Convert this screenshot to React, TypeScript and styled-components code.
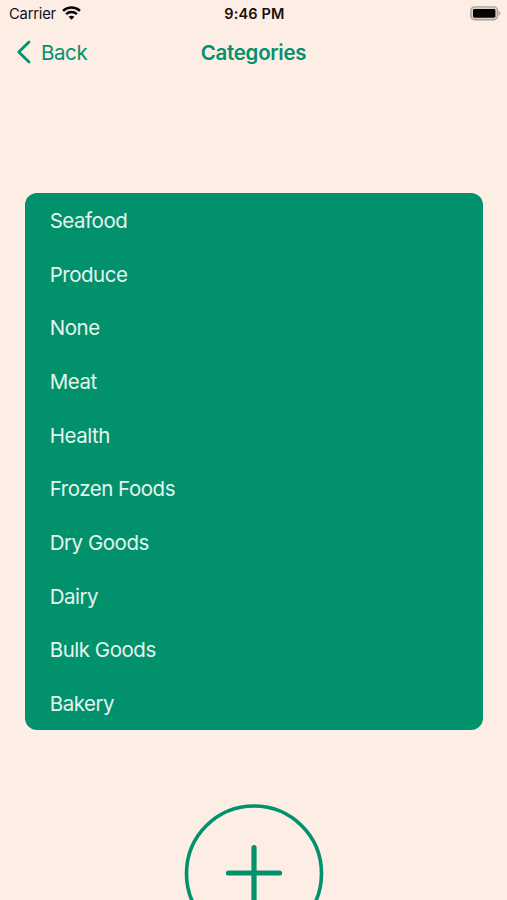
import React from "react";
import styled, { createGlobalStyle } from "styled-components";

const GREEN = "#02916d";
const CREAM = "#fdeee5";

const GlobalStyle = createGlobalStyle`
  * { box-sizing: border-box; }
  body { margin: 0; background: ${CREAM}; font-family: Inter, sans-serif; }
`;

const Screen = styled.main`
  display: flex;
  flex-direction: column;
  width: 100%;
  height: 900px;
  overflow: hidden;
  background: ${CREAM};
`;

const StatusBar = styled.header`
  flex: none;
  display: grid;
  grid-template-columns: 1fr auto 1fr;
  align-items: center;
  height: 27px;
  padding: 0 6px 0 9px;
  color: #15100e;
  font-size: 15px;
  line-height: 27px;
`;

const Carrier = styled.div`
  display: flex;
  align-items: center;
  gap: 6px;
  padding-top: 2px;
  font-size: 14.8px;
  line-height: 25px;
  letter-spacing: -0.22px;

  svg { margin-bottom: 3px; }
`;

const Clock = styled.time`
  margin-right: 1px;
  font-weight: 600;
  font-size: 14.5px;
  letter-spacing: 0.15px;
`;

const BatteryIcon = styled.svg`
  justify-self: end;
`;

const NavBar = styled.nav`
  flex: none;
  display: grid;
  grid-template-columns: 1fr auto 1fr;
  align-items: center;
  height: 51px;
  padding: 0 16px;
  color: ${GREEN};
`;

const BackButton = styled.button`
  display: flex;
  align-items: center;
  justify-self: start;
  gap: 10px;
  padding: 0;
  border: 0;
  background: none;
  color: inherit;
  font: 400 20.5px/28px Inter, sans-serif;
  letter-spacing: -0.4px;

  svg { margin-bottom: 2px; }
`;

const Title = styled.h1`
  margin: 0;
  font-size: 20.5px;
  font-weight: 600;
  line-height: 28px;
  letter-spacing: -0.3px;
`;

const CategoryList = styled.ul`
  flex: none;
  margin: 115px 24.5px 0 25.4px;
  padding: 0;
  border-radius: 12px;
  background: ${GREEN};
  list-style: none;
  overflow: hidden;
`;

const CategoryRow = styled.li`
  display: flex;
  align-items: center;
  height: 53.7px;
  padding: 1px 24.3px 0;
  color: #e4f5ec;
  font-size: 20.5px;
  letter-spacing: -0.47px;

  & + & {
    box-shadow: inset 0 1px 0 rgba(0, 70, 50, 0.03);
  }
`;

const AddButton = styled.button`
  flex: none;
  align-self: center;
  display: block;
  margin-top: 74px;
  padding: 0;
  border: 0;
  background: none;
  color: ${GREEN};

  svg { display: block; }
`;

const categories = [
  "Seafood",
  "Produce",
  "None",
  "Meat",
  "Health",
  "Frozen Foods",
  "Dry Goods",
  "Dairy",
  "Bulk Goods",
  "Bakery",
];

export default function App() {
  return (
    <>
      <GlobalStyle />
      <Screen>
        <StatusBar>
          <Carrier>
            Carrier
            <svg width="19" height="14" viewBox="0 0 19 14" fill="none" stroke="#080706" strokeWidth="2.5">
              <path d="M1 4.8C5.8 0.4 13.2 0.4 18 4.8" />
              <path d="M4.1 8.1C7.2 5.3 11.8 5.3 14.9 8.1" />
              <path d="M6.6 10.8C8.3 9.3 10.7 9.3 12.4 10.8L9.5 13.8Z" fill="#080706" stroke="none" />
            </svg>
          </Carrier>
          <Clock>9:46 PM</Clock>
          <BatteryIcon width="31" height="15" viewBox="0 0 31 15">
            <rect x="0.9" y="0.9" width="26.6" height="12.8" rx="3.7" fill="#dfd2ca" stroke="#aaa09b" strokeWidth="1.4" />
            <rect x="3" y="3" width="22.4" height="8.7" rx="1.4" fill="#050403" />
            <path d="M28.6 4.9C31 5.9 31 8.7 28.6 9.7Z" fill="#aaa09b" />
          </BatteryIcon>
        </StatusBar>
        <NavBar>
          <BackButton>
            <svg width="15" height="24" viewBox="0 0 15 24" fill="none" stroke="currentColor" strokeWidth="2.8" strokeLinecap="round" strokeLinejoin="round">
              <path d="M13 2L2.8 12L13 22" />
            </svg>
            Back
          </BackButton>
          <Title>Categories</Title>
        </NavBar>
        <CategoryList>
          {categories.map((name) => (
            <CategoryRow key={name}>{name}</CategoryRow>
          ))}
        </CategoryList>
        <AddButton aria-label="Add category">
          <svg width="140" height="140" viewBox="0 0 140 140" fill="none" stroke="currentColor" strokeLinecap="round">
            <circle cx="70" cy="69.5" r="67.5" strokeWidth="3.6" />
            <path d="M44.5 69H95.5M70 43.5V96" strokeWidth="5.2" />
          </svg>
        </AddButton>
      </Screen>
    </>
  );
}
